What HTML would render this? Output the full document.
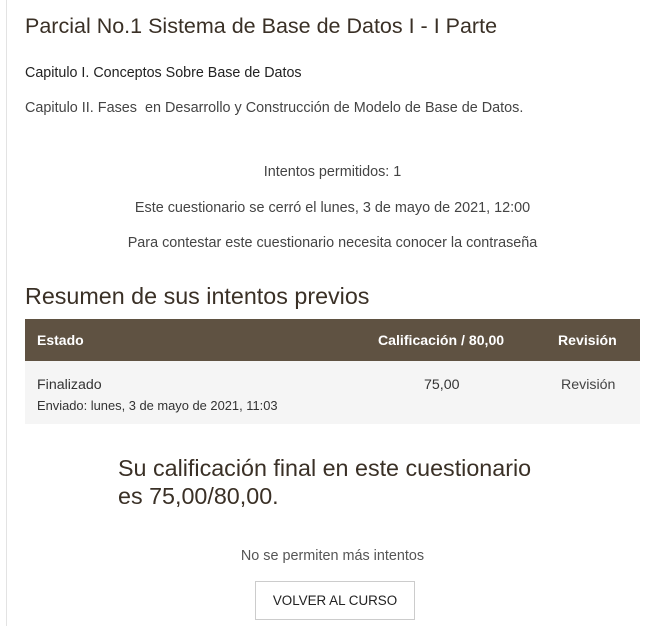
<!DOCTYPE html>
<html><head><meta charset="utf-8"><style>
body{margin:0;width:659px;height:626px;background:#fff;font-family:"Liberation Sans",sans-serif;color:#373a3c;position:relative;overflow:hidden}
.a{position:absolute;white-space:nowrap}
.c{left:25px;width:615px;text-align:center}
</style></head><body>
<div class="a" style="left:6px;top:0;width:1px;height:626px;background:#e3e3e3"></div>
<div class="a" style="left:25px;top:14px;font-size:21.5px;color:#3a3026">Parcial No.1 Sistema de Base de Datos I - I Parte</div>
<div class="a" style="left:25px;top:65px;font-size:14.3px;color:#222">Capitulo I. Conceptos Sobre Base de Datos</div>
<div class="a" style="left:25px;top:100px;font-size:14.4px;color:#444">Capitulo II. Fases&nbsp; en Desarrollo y Construcción de Modelo de Base de Datos.</div>
<div class="a c" style="top:164px;font-size:14.4px;color:#444">Intentos permitidos: 1</div>
<div class="a c" style="top:200px;font-size:14.4px;color:#444">Este cuestionario se cerró el lunes, 3 de mayo de 2021, 12:00</div>
<div class="a c" style="top:235px;font-size:14.4px;color:#444">Para contestar este cuestionario necesita conocer la contraseña</div>
<div class="a" style="left:25px;top:283px;font-size:23.3px;color:#3a3026">Resumen de sus intentos previos</div>
<div class="a" style="left:25px;top:319px;width:615px;height:42px;background:#5f5242"></div>
<div class="a" style="left:37px;top:332px;font-size:14px;font-weight:bold;color:#fff">Estado</div>
<div class="a" style="left:378px;top:332px;font-size:14.1px;font-weight:bold;color:#fff">Calificación / 80,00</div>
<div class="a" style="left:558px;top:332px;font-size:14.1px;font-weight:bold;color:#fff">Revisión</div>
<div class="a" style="left:25px;top:361px;width:615px;height:63px;background:#f5f5f5"></div>
<div class="a" style="left:37px;top:377px;font-size:14.2px;color:#333">Finalizado</div>
<div class="a" style="left:37px;top:398px;font-size:12.9px;color:#333">Enviado: lunes, 3 de mayo de 2021, 11:03</div>
<div class="a" style="left:424px;top:377px;font-size:14.2px;color:#333">75,00</div>
<div class="a" style="left:561px;top:377px;font-size:14.2px;color:#444">Revisión</div>
<div class="a" style="left:118px;top:454px;font-size:23.3px;line-height:28px;color:#3a3026">Su calificación final en este cuestionario<br>es 75,00/80,00.</div>
<div class="a c" style="top:548px;font-size:14.4px;color:#555">No se permiten más intentos</div>
<div class="a" style="left:255px;top:581px;width:160px;height:39px;border:1px solid #ccc;box-sizing:border-box;text-align:center;line-height:37px;font-size:13.4px;color:#222">VOLVER AL CURSO</div>
</body></html>
